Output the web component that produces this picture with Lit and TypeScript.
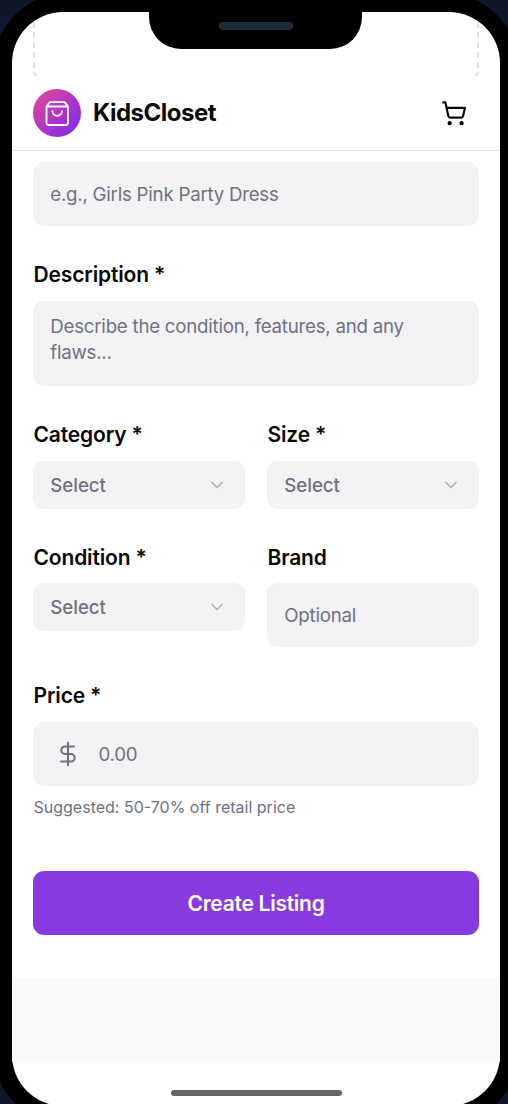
import { LitElement, html, css, svg } from "lit";
import { customElement, property } from "lit/decorators.js";

const chevron = html`<svg class="chevron" width="20" height="20" viewBox="0 0 24 24" fill="none" stroke="currentColor" stroke-width="2" stroke-linecap="round" stroke-linejoin="round"><path d="m6 9 6 6 6-6"/></svg>`;

const dashes = (x: number, bend: number) => svg`
  <path d="M${x} 9.8V56" stroke-dasharray="6.2 3.8"/>
  <path d="M${x} 59.5q0 3 ${bend} 5.5"/>`;

@customElement("form-field")
class FormField extends LitElement {
  @property() label = "";
  @property() placeholder = "";
  @property() kind = "input";

  static styles = css`
    :host { display: block; min-width: 0; }
    .label { height: 27px; line-height: 27px; margin-bottom: var(--label-gap, 13px); padding-left: 0.5px; font-size: 21px; font-weight: 600; letter-spacing: -0.15px; color: #0a0a0a; white-space: nowrap; }
    .box { box-sizing: border-box; display: flex; align-items: center; height: 64px; padding: 2px 17px 0 17.3px; border-radius: 11px; background: #f3f3f5; color: #717182; font-size: 18.7px; line-height: 26px; letter-spacing: -0.24px; }
    .select { height: 48px; padding-right: 18px; justify-content: space-between; font-weight: 500; letter-spacing: -0.05px; }
    .textarea { height: 85px; align-items: flex-start; padding-top: 13px; }
    .price { padding-left: 22px; gap: 17.5px; }
    .chevron { margin-top: -2px; opacity: .5; }
    .dollar { margin-top: -2px; }
  `;

  render() {
    return html`
      ${this.label ? html`<div class="label">${this.label}</div>` : ""}
      <div class="box ${this.kind}">
        ${this.kind === "price"
          ? html`<svg class="dollar" width="26" height="26" viewBox="0 0 24 24" fill="none" stroke="currentColor" stroke-width="1.9" stroke-linecap="round" stroke-linejoin="round"><path d="M12 1.6v20.8M17.6 5H9.3a3.5 3.5 0 0 0 0 7h5.4a3.5 3.5 0 0 1 0 7H5.6"/></svg>`
          : ""}
        <span>${this.placeholder}</span>
        ${this.kind === "select" ? chevron : ""}
      </div>`;
  }
}

@customElement("app-root")
class AppRoot extends LitElement {
  static styles = css`
    :host { display: block; height: 1104px; overflow: hidden; background: #0f172b; font-family: Inter, "Liberation Sans", sans-serif; }
    .phone { box-sizing: border-box; width: 522px; height: 1128px; margin: -5px 0 0 -5px; border: 17px solid #000; border-radius: 68px; background: #000; }
    .screen { position: relative; display: flex; flex-direction: column; height: 1094px; overflow: hidden; border-radius: 51px; background: #fff; }
    .notch { position: absolute; top: 0; left: 137px; display: flex; justify-content: center; width: 213px; height: 37px; border-radius: 0 0 32px 32px; background: #000; }
    .speaker { width: 74px; height: 8px; margin-top: 10px; border-radius: 4px; background: #1d293d; }
    .upload { display: block; flex: none; height: 64px; }
    .header { box-sizing: border-box; flex: none; display: flex; align-items: center; height: 75px; padding: 0 33px 0 21px; border-bottom: 1px solid #e5e5e5; }
    .logo { display: flex; align-items: center; justify-content: center; width: 48px; height: 48px; border-radius: 50%; background: linear-gradient(135deg, #e64794, #8a2be8 88%); }
    .brand { flex: 1; margin-left: 12px; font-size: 24px; font-weight: 700; line-height: 32px; letter-spacing: -0.5px; color: #0a0a0a; }
    .form { flex: none; display: flex; flex-direction: column; padding: 11px 21px 43px; }
    .description { margin-top: 35px; }
    .row { display: grid; grid-template-columns: 1fr 1fr; gap: 22px; margin-top: 35px; }
    .row.second { --label-gap: 12px; }
    .price { margin-top: 35px; }
    .hint { margin-top: 10px; padding-left: 0.5px; height: 23px; font-size: 16px; line-height: 23px; letter-spacing: 0; color: #717182; }
    .submit { display: flex; align-items: center; justify-content: center; height: 64px; margin-top: 52px; padding: 0; border: 0; border-radius: 11px; background: #8839e0; color: #fff; font: 600 21px Inter, sans-serif; letter-spacing: -0.26px; }
    .footer { flex: none; height: 85px; background: #f9fafc; }
    .home { align-self: center; flex: none; width: 171px; height: 6px; margin-top: 27px; border-radius: 3px; background: #666; }
  `;

  render() {
    return html`
      <div class="phone">
        <div class="screen">
          <svg class="upload" width="488" height="64" fill="none" stroke="#e4e4e4" stroke-width="2">${dashes(22, 3)}${dashes(466, -3)}</svg>
          <div class="header">
            <div class="logo">
              <svg width="26" height="26" viewBox="0 0 24 24" fill="none" stroke="#fff" stroke-width="1.7" stroke-linecap="round" stroke-linejoin="round"><path d="M5.4 2 2.3 5.9v15.2a2 2 0 0 0 2 2h15.8a2 2 0 0 0 2-2V5.9L19 2ZM2.3 6h19.8"/><path d="M16.6 10.2a4.4 4.4 0 0 1-8.8 0"/></svg>
            </div>
            <div class="brand">KidsCloset</div>
            <svg width="26" height="26" viewBox="0 0 24 24" fill="none" stroke="#0a0a0a" stroke-width="2" stroke-linecap="round" stroke-linejoin="round"><circle cx="8" cy="21.4" r="1"/><circle cx="19" cy="21.4" r="1"/><path d="M2.05 2.2h2l2.66 12.42a2 2 0 0 0 2 1.58h9.78a2 2 0 0 0 1.95-1.57l1.65-7.43H5.12"/></svg>
          </div>
          <div class="form">
            <form-field placeholder="e.g., Girls Pink Party Dress"></form-field>
            <form-field class="description" label="Description *" kind="textarea" placeholder="Describe the condition, features, and any flaws..."></form-field>
            <div class="row">
              <form-field label="Category *" kind="select" placeholder="Select"></form-field>
              <form-field label="Size *" kind="select" placeholder="Select"></form-field>
            </div>
            <div class="row second">
              <form-field label="Condition *" kind="select" placeholder="Select"></form-field>
              <form-field label="Brand" placeholder="Optional"></form-field>
            </div>
            <form-field class="price" label="Price *" kind="price" placeholder="0.00"></form-field>
            <div class="hint">Suggested: 50-70% off retail price</div>
            <button class="submit">Create Listing</button>
          </div>
          <div class="footer"></div>
          <div class="home"></div>
          <div class="notch"><div class="speaker"></div></div>
        </div>
      </div>`;
  }
}
